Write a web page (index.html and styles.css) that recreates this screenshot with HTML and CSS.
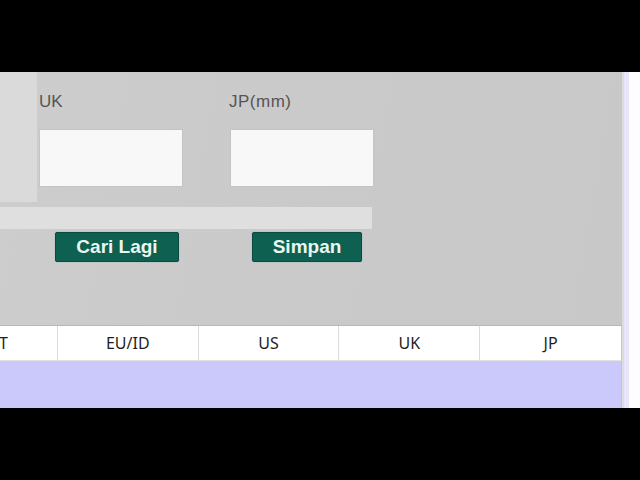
FILE: index.html
```html
<!DOCTYPE html>
<html>
<head>
<meta charset="utf-8">
<link rel="stylesheet" href="styles.css">
</head>
<body>
<div class="screen">
  <div class="band"></div>
  <div class="view">
    <div class="main">
      <div class="form">
        <div class="row-fields">
          <div class="side-panel"></div>
          <div class="field field-uk">
            <div class="label">UK</div>
            <div class="input"></div>
          </div>
          <div class="field field-jp">
            <div class="label">JP(mm)</div>
            <div class="input"></div>
          </div>
        </div>
        <div class="strip"></div>
        <div class="row-buttons">
          <div class="btn btn-cari">Cari Lagi</div>
          <div class="btn btn-simpan">Simpan</div>
        </div>
      </div>
      <div class="thead">
        <div class="th th-first">T</div>
        <div class="th">EU/ID</div>
        <div class="th">US</div>
        <div class="th">UK</div>
        <div class="th th-last">JP</div>
      </div>
      <div class="tbody"></div>
    </div>
    <div class="scroll">
      <div class="scroll-edge"></div>
      <div class="scroll-tint"></div>
      <div class="scroll-white"></div>
    </div>
  </div>
  <div class="band"></div>
</div>
</body>
</html>
```
FILE: styles.css
```css
html, body {
  margin: 0;
  padding: 0;
  background: #000;
}
.screen {
  width: 640px;
  height: 480px;
  display: flex;
  flex-direction: column;
}
.band {
  height: 72px;
  background: #000;
}
.view {
  height: 336px;
  display: flex;
}
.main {
  width: 622px;
  display: flex;
  flex-direction: column;
}
.form {
  height: 253px;
  background: linear-gradient(100deg, #cdcdcd 0%, #c9c9c9 60%, #c8c8c8 100%);
  border-bottom: 1px solid #b8b8b8;
}
.row-fields {
  height: 135px;
  display: flex;
  align-items: flex-start;
}
.side-panel {
  width: 37px;
  height: 130px;
  background: #dadada;
}
.field {
  display: flex;
  flex-direction: column;
  padding-top: 20px;
}
.field-uk {
  margin-left: 2px;
}
.field-jp {
  margin-left: 47px;
}
.label {
  font-family: "Liberation Sans", Arial, sans-serif;
  font-size: 17px;
  line-height: 19px;
  color: #555;
  height: 19px;
}
.field-jp .label {
  margin-left: -1px;
  letter-spacing: 0.5px;
}
.input {
  margin-top: 18px;
  width: 142px;
  height: 56px;
  background: #f8f8f8;
  border: 1px solid #c4c4c4;
}
.strip {
  width: 372px;
  height: 22px;
  background: #dfdfdf;
}
.row-buttons {
  margin-top: 3px;
  display: flex;
}
.btn {
  height: 28px;
  background: #0e6151;
  border: 1px solid #0a4a3f;
  border-radius: 2px;
  box-shadow: 0 0 1px #4f9c8c;
  color: #e9f6f1;
  font-family: "Liberation Sans", Arial, sans-serif;
  font-weight: bold;
  font-size: 19px;
  line-height: 28px;
  text-align: center;
}
.btn-cari {
  margin-left: 55px;
  width: 122px;
}
.btn-simpan {
  margin-left: 73px;
  width: 108px;
}
.thead {
  height: 35px;
  background: #fff;
  display: flex;
  border-right: 1px solid #c8c8c8;
  box-sizing: border-box;
  border-bottom: 1px solid #e2e2e2;
}
.th {
  width: 141px;
  border-right: 1px solid #dcdcdc;
  box-sizing: border-box;
  font-family: "Noto Sans", "Open Sans", sans-serif;
  font-size: 16px;
  line-height: 34px;
  color: #1e1e1e;
  text-align: center;
}
.th-first {
  width: 58px;
  text-align: left;
  text-indent: -1px;
}
.th-last {
  border-right: none;
}
.tbody {
  flex: 1;
  background: #cbc8fb;
  border-right: 1px solid #c4c2e0;
}
.scroll {
  flex: 1;
  display: flex;
}
.scroll-edge {
  width: 2px;
  background: #dcdcdc;
}
.scroll-tint {
  width: 5px;
  background: #e7e5fb;
}
.scroll-white {
  flex: 1;
  background: #fdfdff;
}
```
